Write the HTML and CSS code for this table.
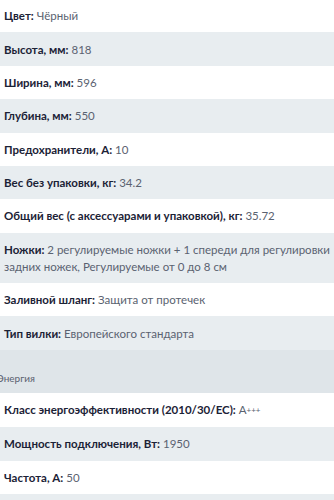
FILE: index.html
```html
<!DOCTYPE html>
<html lang="ru">
<head>
<meta charset="utf-8">
<link rel="stylesheet" href="styles.css">
</head>
<body>
<div class="specs">
  <div class="row top"><b>Цвет:</b> Чёрный</div>
  <div class="row alt"><b>Высота, мм:</b> 818</div>
  <div class="row"><b>Ширина, мм:</b> 596</div>
  <div class="row alt"><b>Глубина, мм:</b> 550</div>
  <div class="row"><b>Предохранители, А:</b> 10</div>
  <div class="row alt"><b>Вес без упаковки, кг:</b> 34.2</div>
  <div class="row"><b>Общий вес (с аксессуарами и упаковкой), кг:</b> 35.72</div>
  <div class="row alt"><b>Ножки:</b> 2 регулируемые ножки + 1 спереди для регулировки задних ножек, Регулируемые от 0 до 8 см</div>
  <div class="row"><b>Заливной шланг:</b> Защита от протечек</div>
  <div class="row alt"><b>Тип вилки:</b> Европейского стандарта</div>
  <div class="section">Энергия</div>
  <div class="row"><b>Класс энергоэффективности (2010/30/EC):</b> A<span class="plus">+++</span></div>
  <div class="row alt"><b>Мощность подключения, Вт:</b> 1950</div>
  <div class="row"><b>Частота, А:</b> 50</div>
  <div class="row alt empty"></div>
</div>
</body>
</html>
```
FILE: styles.css
```css
html, body {
  margin: 0;
  padding: 0;
  background: #ffffff;
}
body {
  font-family: Lato, "Open Sans", sans-serif;
  font-size: 11.5px;
  overflow: hidden;
  height: 500px;
}
.specs {
  display: flex;
  flex-direction: column;
  margin-top: -1px;
}
.row {
  padding: 8.2px 3px 8.2px 4px;
  line-height: 17px;
  color: #5a6270;
  background: #ffffff;
}
.row b {
  color: #1b2236;
  font-weight: 700;
}
.row.alt {
  background: #e8edf0;
}
.row.empty {
  height: 17px;
}
.plus {
  font-size: 8px;
  vertical-align: 1px;
}
.section {
  background: #dfe5e9;
  height: 43px;
  box-sizing: border-box;
  padding: 20px 0 0 0;
  margin-left: -3px;
  font-size: 10px;
  line-height: 17px;
  color: #5a6270;
}
```
